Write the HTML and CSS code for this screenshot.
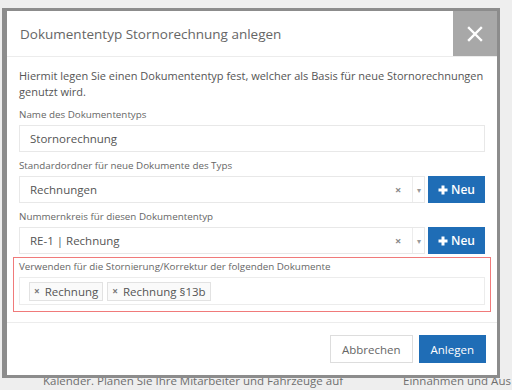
FILE: index.html
```html
<!DOCTYPE html>
<html lang="de">
<head>
    <meta charset="UTF-8">
    <meta name="viewport" content="width=device-width, initial-scale=1.0">
    <title>Dokumententyp anlegen</title>
    <link rel="stylesheet" href="styles.css">
</head>
<body>
    <!-- Seite hinter dem Dialog -->
    <div class="page-behind">
        <span class="bg-left">Kalender. Planen Sie Ihre Mitarbeiter und Fahrzeuge auf</span>
        <span class="bg-right">Einnahmen und Aus</span>
    </div>

    <!-- Dialog -->
    <div class="modal">
        <div class="modal-header">
            <h1 class="modal-title">Dokumententyp Stornorechnung anlegen</h1>
            <button class="close-btn" type="button">
                <svg width="16" height="16" viewBox="0 0 16 16">
                    <path d="M2 2 L14 14 M14 2 L2 14" stroke="#fff" stroke-width="2.4" stroke-linecap="square"/>
                </svg>
            </button>
        </div>

        <div class="modal-body">
            <p class="intro">Hiermit legen Sie einen Dokumententyp fest, welcher als Basis für neue Stornorechnungen genutzt wird.</p>

            <div class="form-group">
                <label>Name des Dokumententyps</label>
                <div class="input">Stornorechnung</div>
            </div>

            <div class="form-group">
                <label>Standardordner für neue Dokumente des Typs</label>
                <div class="select-row">
                    <div class="select">
                        <span class="value">Rechnungen</span>
                        <span class="clear">×</span>
                        <span class="arrow">▾</span>
                    </div>
                    <button class="btn-new" type="button">
                        <svg width="10" height="10" viewBox="0 0 10 10">
                            <path d="M5 0.5 V9.5 M0.5 5 H9.5" stroke="#fff" stroke-width="3"/>
                        </svg>
                        Neu
                    </button>
                </div>
            </div>

            <div class="form-group last">
                <label>Nummernkreis für diesen Dokumententyp</label>
                <div class="select-row">
                    <div class="select">
                        <span class="value">RE-1 | Rechnung</span>
                        <span class="clear">×</span>
                        <span class="arrow">▾</span>
                    </div>
                    <button class="btn-new" type="button">
                        <svg width="10" height="10" viewBox="0 0 10 10">
                            <path d="M5 0.5 V9.5 M0.5 5 H9.5" stroke="#fff" stroke-width="3"/>
                        </svg>
                        Neu
                    </button>
                </div>
            </div>

            <div class="highlight">
                <label>Verwenden für die Stornierung/Korrektur der folgenden Dokumente</label>
                <div class="tag-input">
                    <span class="tag"><span class="tag-x">×</span>Rechnung</span>
                    <span class="tag"><span class="tag-x">×</span>Rechnung §13b</span>
                </div>
            </div>
        </div>

        <div class="modal-footer">
            <button class="btn btn-default" type="button">Abbrechen</button>
            <button class="btn btn-primary" type="button">Anlegen</button>
        </div>
    </div>
</body>
</html>
```

FILE: styles.css
```css
body {
    margin: 0;
    width: 512px;
    height: 390px;
    overflow: hidden;
    position: relative;
    background-color: #eeeeee;
    font-family: "Open Sans", "Liberation Sans", sans-serif;
    color: #555;
}
.page-behind {
    display: flex;
    padding: 373px 0 0 43px;
    font-size: 11.5px;
    line-height: 15px;
    color: #6e6e6e;
}
.bg-left {
    width: 360px;
    white-space: nowrap;
}
.bg-right {
    white-space: nowrap;
}
.modal {
    position: absolute;
    left: 2px;
    top: 8px;
    width: 490px;
    background-color: #fff;
    border: 3px solid #8c8c8c;
    border-left-width: 5px;
}
.modal-header {
    display: flex;
    align-items: center;
    height: 45px;
    border-bottom: 1px solid #ececec;
}
.modal-title {
    margin: 0;
    padding-left: 13px;
    font-size: 13.5px;
    font-weight: normal;
    color: #666;
}
.close-btn {
    margin-left: auto;
    align-self: flex-start;
    width: 44px;
    height: 45px;
    border: none;
    padding: 0;
    background-color: #a8a8a8;
    display: flex;
    align-items: center;
    justify-content: center;
}
.modal-body {
    padding: 11px 12px 10px;
}
.intro {
    margin: 0 0 8px;
    font-size: 11px;
    line-height: 16px;
    color: #555;
}
.form-group {
    margin-bottom: 7px;
}
.form-group.last {
    margin-bottom: 3px;
}
label {
    display: block;
    font-size: 9.8px;
    line-height: 14px;
    margin-bottom: 3px;
    color: #666;
}
.input {
    height: 25px;
    line-height: 25px;
    border: 1px solid #e8e8e8;
    padding-left: 10px;
    font-size: 11.5px;
    color: #555;
}
.select-row {
    display: flex;
    gap: 3px;
}
.select {
    flex: 1;
    display: flex;
    align-items: center;
    height: 25px;
    border: 1px solid #e8e8e8;
    font-size: 11.5px;
}
.select .value {
    flex: 1;
    padding-left: 10px;
    color: #555;
}
.select .clear {
    width: 17px;
    font-size: 11px;
    color: #888;
    font-weight: bold;
}
.select .arrow {
    width: 11px;
    height: 25px;
    line-height: 25px;
    border-left: 1px solid #ececec;
    text-align: center;
    font-size: 8px;
    color: #999;
}
.btn-new {
    width: 57px;
    height: 27px;
    border: none;
    background-color: #1f6db6;
    color: #fff;
    font-family: inherit;
    font-size: 12px;
    font-weight: 600;
    display: flex;
    align-items: center;
    justify-content: center;
    gap: 3px;
    padding: 0;
}
.highlight {
    margin: 0 -6px;
    padding: 2px 5px 6px;
    border: 1px solid #f07a7a;
}
.tag-input {
    display: flex;
    align-items: center;
    gap: 4px;
    height: 26px;
    border: 1px solid #ececec;
    padding-left: 9px;
}
.tag {
    display: flex;
    align-items: center;
    height: 17px;
    padding: 0 4px;
    border: 1px solid #e2e2e2;
    background-color: #fafafa;
    font-size: 11.5px;
    color: #555;
}
.tag-x {
    font-size: 10px;
    font-weight: bold;
    color: #777;
    margin-right: 5px;
}
.modal-footer {
    display: flex;
    justify-content: flex-end;
    gap: 6px;
    padding: 12px 11px 12px;
    border-top: 1px solid #ececec;
}
.btn {
    height: 28px;
    padding: 0 11px;
    font-family: inherit;
    font-size: 11.5px;
}
.btn-default {
    background-color: #fff;
    border: 1px solid #ddd;
    color: #666;
}
.btn-primary {
    background-color: #1f6db6;
    border: 1px solid #1f6db6;
    color: #fff;
}
```
